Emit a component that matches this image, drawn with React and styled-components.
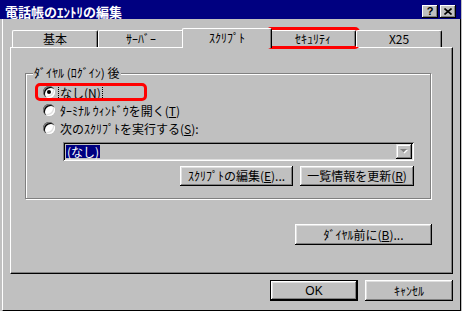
import React from "react";
import styled, { createGlobalStyle } from "styled-components";

const FACE = "#c0c0c0";
const FONT = `"Noto Sans CJK JP", "Noto Sans", sans-serif`;

const Global = createGlobalStyle`
  html, body { margin: 0; padding: 0; background: ${FACE}; }
  body { font-family: ${FONT}; font-size: 12px; color: #000; }
  * { box-sizing: border-box; }
`;

const Window = styled.div`
  width: 462px;
  height: 311px;
  background: ${FACE};
  display: flex;
  flex-direction: column;
  overflow: hidden;
`;

const TitleBar = styled.div`
  height: 19px;
  margin-right: 1px;
  background: #000080;
  display: flex;
  align-items: center;
  padding: 4px 5px 0 5px;
`;

const TitleText = styled.div`
  flex: 1;
  color: #fff;
  font-weight: bold;
  font-size: 13px;
  line-height: 14px;
  white-space: nowrap;
`;

const CapButton = styled.div`
  width: 16px;
  height: 13px;
  margin-left: ${(p) => (p.$gap ? 2 : 0)}px;
  background: ${FACE};
  box-shadow: inset -1px -1px #000, inset 1px 1px #fff, inset -2px -2px #808080;
  display: flex;
  align-items: center;
  justify-content: center;
  font-family: "Liberation Sans", sans-serif;
  font-weight: bold;
  font-size: 11px;
  line-height: 11px;
  padding-bottom: 1px;
`;

const Body = styled.div`
  flex: 1;
  margin: 0 1px 0 2px;
  border-left: 1px solid #fff;
  border-right: 1px solid #000;
  border-bottom: 1px solid #000;
  padding: 9px 7px 9px 7px;
  display: flex;
  flex-direction: column;
`;

const TabStrip = styled.div`
  height: 19px;
  padding-left: 2px;
  display: flex;
  align-items: flex-end;
  position: relative;
  z-index: 2;
`;

const Tab = styled.div`
  position: relative;
  width: ${(p) => (p.$active ? 90 : 86)}px;
  height: ${(p) => (p.$active ? 20 : 17)}px;
  margin: ${(p) => (p.$active ? "0 -2px -1px -2px" : "0")};
  z-index: ${(p) => (p.$active ? 2 : 1)};
  background: ${FACE};
  border-top: 1px solid #fff;
  border-left: 1px solid #fff;
  border-right: 1px solid #000;
  border-radius: 2px 2px 0 0;
  box-shadow: inset -1px 0 #808080;
  display: flex;
  align-items: center;
  justify-content: center;
  padding-bottom: ${(p) => (p.$active ? 2 : 0)}px;
  white-space: nowrap;
  line-height: 14px;
`;

const RedMark = styled.div`
  position: absolute;
  border: 3px solid #ff0000;
  border-radius: 5px;
  pointer-events: none;
  z-index: 5;
`;

const TabMark = styled(RedMark)`
  top: -4px;
  left: -5px;
  width: 94px;
  height: 22px;
`;

const Panel = styled.div`
  position: relative;
  z-index: 0;
  height: 227px;
  border-top: 1px solid #fff;
  border-left: 1px solid #fff;
  border-right: 1px solid #000;
  border-bottom: 1px solid #000;
  box-shadow: inset -1px -1px #808080;
  padding: 25px 0 0 14px;
  display: flex;
  flex-direction: column;
`;

const Group = styled.div`
  position: relative;
  width: 406px;
  border: 1px solid #808080;
  box-shadow: 1px 1px 0 #fff, inset 1px 1px 0 #fff;
  padding: 9px 0 12px 17px;
  display: flex;
  flex-direction: column;
`;

const GroupLabel = styled.div`
  position: absolute;
  top: -8px;
  left: 7px;
  padding: 0 1px;
  background: ${FACE};
  line-height: 14px;
  white-space: nowrap;
`;

const RadioRow = styled.div`
  position: relative;
  height: 18px;
  display: flex;
  align-items: center;
  white-space: nowrap;
`;

const RowMark = styled(RedMark)`
  top: 0;
  left: -8px;
  width: 112px;
  height: 18px;
`;

const Radio = styled.div`
  position: relative;
  width: 12px;
  height: 12px;
  border-radius: 50%;
  background: #fff;
  box-shadow: inset 1px 1px 0 #808080, inset 2px 2px 0 #000, inset -1px -1px 0 #fff,
    inset -2px -2px 0 #dfdfdf;
  flex-shrink: 0;
  &::after {
    content: "";
    display: ${(p) => (p.$checked ? "block" : "none")};
    position: absolute;
    left: 4px;
    top: 4px;
    width: 4px;
    height: 4px;
    border-radius: 50%;
    background: #000;
  }
`;

const RadioText = styled.span`
  margin-left: 3px;
  padding: 0 1px;
  line-height: 13px;
  border: 1px dotted ${(p) => (p.$focus ? "#000" : "transparent")};
`;

const U = styled.span`
  text-decoration: underline;
  text-underline-offset: 1px;
`;

const Combo = styled.div`
  margin: 5px 0 0 20px;
  width: 351px;
  height: 19px;
  background: ${FACE};
  box-shadow: inset 1px 1px #808080, inset -1px -1px #fff, inset 2px 2px #000, inset -2px -2px #dfdfdf;
  padding: 2px 2px 2px 3px;
  display: flex;
  align-items: center;
`;

const ComboValue = styled.div`
  flex: 1;
  display: flex;
  align-items: center;
`;

const Selected = styled.span`
  background: #000080;
  color: #fff;
  line-height: 13px;
  padding: 0 1px;
`;

const ComboArrow = styled.div`
  width: 16px;
  height: 15px;
  background: ${FACE};
  box-shadow: inset -1px -1px #000, inset 1px 1px #dfdfdf, inset -2px -2px #808080, inset 2px 2px #fff;
  display: flex;
  align-items: center;
  justify-content: center;
`;

const ButtonRow = styled.div`
  margin: 5px 0 0 20px;
  width: 351px;
  display: flex;
  justify-content: flex-end;
  gap: 7px;
`;

const Button = styled.div`
  width: ${(p) => p.$w}px;
  height: ${(p) => p.$h || 21}px;
  background: ${FACE};
  border: ${(p) => (p.$default ? "1px solid #000" : "none")};
  box-shadow: inset -1px -1px #000, inset 1px 1px #fff, inset -2px -2px #808080, inset 2px 2px #dfdfdf;
  display: flex;
  align-items: center;
  justify-content: center;
  white-space: nowrap;
  line-height: 14px;
`;

const DialRow = styled.div`
  width: 407px;
  margin-top: 25px;
  display: flex;
  justify-content: flex-end;
`;

const Footer = styled.div`
  margin-top: 6px;
  display: flex;
  justify-content: flex-end;
  gap: 7px;
`;

const OkText = styled.span`
  font-family: "Liberation Sans", sans-serif;
`;

export default function App() {
  return (
    <>
      <Global />
      <Window>
        <TitleBar>
          <TitleText>電話帳のｴﾝﾄﾘの編集</TitleText>
          <CapButton>?</CapButton>
          <CapButton $gap>
            <svg width="8" height="7" viewBox="0 0 8 7">
              <path d="M0.5 0.5 L7.5 6.5 M7.5 0.5 L0.5 6.5" stroke="#000" strokeWidth="1.6" />
            </svg>
          </CapButton>
        </TitleBar>
        <Body>
          <TabStrip>
            <Tab>基本</Tab>
            <Tab>ｻｰﾊﾞｰ</Tab>
            <Tab $active>ｽｸﾘﾌﾟﾄ</Tab>
            <Tab>
              ｾｷｭﾘﾃｨ
              <TabMark />
            </Tab>
            <Tab>X25</Tab>
          </TabStrip>
          <Panel>
            <Group>
              <GroupLabel>ﾀﾞｲﾔﾙ (ﾛｸﾞｲﾝ) 後</GroupLabel>
              <RadioRow>
                <Radio $checked />
                <RadioText $focus>
                  なし(<U>N</U>)
                </RadioText>
                <RowMark />
              </RadioRow>
              <RadioRow>
                <Radio />
                <RadioText>
                  ﾀｰﾐﾅﾙ ｳｨﾝﾄﾞｳを開く(<U>T</U>)
                </RadioText>
              </RadioRow>
              <RadioRow>
                <Radio />
                <RadioText>
                  次のｽｸﾘﾌﾟﾄを実行する(<U>S</U>):
                </RadioText>
              </RadioRow>
              <Combo>
                <ComboValue>
                  <Selected>(なし)</Selected>
                </ComboValue>
                <ComboArrow>
                  <svg width="8" height="5" viewBox="0 0 8 5">
                    <path d="M1 1 L8 1 L4.5 4.5 Z" fill="#fff" />
                    <path d="M0 0 L7 0 L3.5 3.5 Z" fill="#808080" />
                  </svg>
                </ComboArrow>
              </Combo>
              <ButtonRow>
                <Button $w={113} $h={20}>
                  ｽｸﾘﾌﾟﾄの編集(<U>E</U>)...
                </Button>
                <Button $w={114} $h={20}>
                  一覧情報を更新(<U>R</U>)
                </Button>
              </ButtonRow>
            </Group>
            <DialRow>
              <Button $w={137}>
                ﾀﾞｲﾔﾙ前に(<U>B</U>)...
              </Button>
            </DialRow>
          </Panel>
          <Footer>
            <Button $w={88} $default>
              <OkText>OK</OkText>
            </Button>
            <Button $w={88}>ｷｬﾝｾﾙ</Button>
          </Footer>
        </Body>
      </Window>
    </>
  );
}
